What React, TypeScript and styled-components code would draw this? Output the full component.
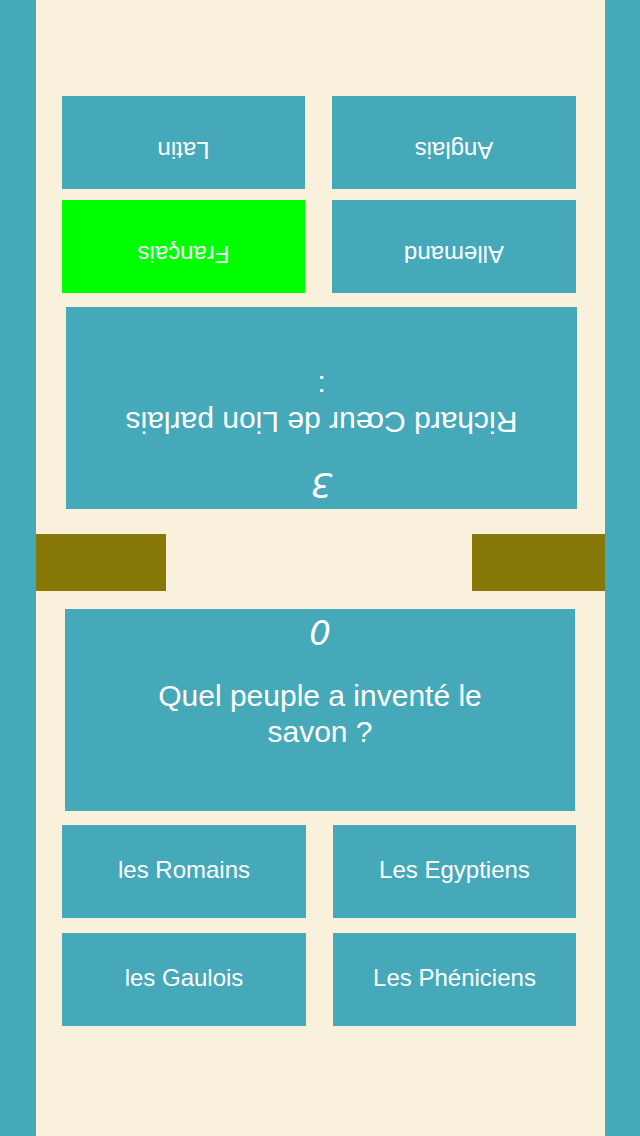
import styled, { createGlobalStyle } from 'styled-components'

const teal = '#46a9b9'
const cream = '#f9f1dc'

type Player = {
  score: number
  question: string
  answers: { label: string; picked?: boolean }[]
}

// the top player sits across the table, so its panel is turned round:
// answers are listed in the turned panel's own reading order
const top: Player = {
  score: 3,
  question: 'Richard Cœur de Lion parlais :',
  answers: [
    { label: 'Allemand' },
    { label: 'Français', picked: true },
    { label: 'Anglais' },
    { label: 'Latin' },
  ],
}

const bottom: Player = {
  score: 0,
  question: 'Quel peuple a inventé le savon ?',
  answers: [
    { label: 'les Romains' },
    { label: 'Les Egyptiens' },
    { label: 'les Gaulois' },
    { label: 'Les Phéniciens' },
  ],
}

const PlayerPanel = ({ player, flipped }: { player: Player; flipped?: boolean }) => (
  <Panel $flipped={flipped}>
    <QuestionCard $flipped={flipped}>
      <Score>{player.score}</Score>
      <QuestionText>{player.question}</QuestionText>
    </QuestionCard>
    <AnswerGrid $rowGap={flipped ? 11 : 15}>
      {player.answers.map((a) => (
        <AnswerButton key={a.label} $picked={a.picked} $lift={flipped ? 16 : 4}>
          {a.label}
        </AnswerButton>
      ))}
    </AnswerGrid>
  </Panel>
)

const App = () => {
  return (
    <>
      <GlobalStyle />
      <Screen>
        <SideBar />
        <Board>
          <PlayerPanel player={top} flipped />
          <TimerRow>
            <TimerBar $width={130} />
            <TimerBar $width={133} />
          </TimerRow>
          <PlayerPanel player={bottom} />
        </Board>
        <SideBar $narrow />
      </Screen>
    </>
  )
}

export default App

const GlobalStyle = createGlobalStyle`
  html, body {
    margin: 0;
    padding: 0;
    background: ${cream};
  }
  body {
    font-family: "Liberation Sans", Arial, sans-serif;
  }
`

const Screen = styled.div`
  display: flex;
  width: 640px;
  height: 1136px;
  overflow: hidden;
`

const SideBar = styled.div<{ $narrow?: boolean }>`
  flex: 0 0 ${(p) => (p.$narrow ? 35 : 36)}px;
  background: ${teal};
`

const Board = styled.main`
  flex: 1;
  display: flex;
  flex-direction: column;
  padding-top: 96px;
  background: ${cream};
`

const Panel = styled.section<{ $flipped?: boolean }>`
  display: flex;
  flex-direction: column;
  gap: 14px;
  padding: ${(p) => (p.$flipped ? '0 26px 0 29px' : '0 29px 0 26px')};
  transform: ${(p) => (p.$flipped ? 'rotate(180deg)' : 'none')};
`

const QuestionCard = styled.div<{ $flipped?: boolean }>`
  height: 202px;
  margin: ${(p) => (p.$flipped ? '0 4px 0 -1px' : '0 1px 0 3px')};
  background: ${teal};
  color: #fff;
  display: flex;
  flex-direction: column;
  align-items: center;
  padding-top: 4px;
  box-sizing: border-box;
`

const Score = styled.div`
  font-family: "DejaVu Sans", sans-serif;
  font-weight: 200;
  font-style: italic;
  font-size: 34px;
  line-height: 40px;
  height: 40px;
`

const QuestionText = styled.p`
  margin: 25px 0 0;
  max-width: 400px;
  font-size: 30px;
  line-height: 36px;
  text-align: center;
`

const AnswerGrid = styled.div<{ $rowGap: number }>`
  display: grid;
  grid-template-columns: 244px 243px;
  grid-auto-rows: 93px;
  column-gap: 27px;
  row-gap: ${(p) => p.$rowGap}px;
`

const AnswerButton = styled.button<{ $picked?: boolean; $lift: number }>`
  border: none;
  padding: 0 0 ${(p) => p.$lift}px;
  background: ${(p) => (p.$picked ? '#00ff00' : teal)};
  color: #fff;
  font-family: "Liberation Sans", Arial, sans-serif;
  font-size: 24px;
  display: flex;
  align-items: center;
  justify-content: center;
`

const TimerRow = styled.div`
  display: flex;
  justify-content: space-between;
  margin: 25px 0 18px;
`

const TimerBar = styled.div<{ $width: number }>`
  width: ${(p) => p.$width}px;
  height: 57px;
  background: #867907;
`
